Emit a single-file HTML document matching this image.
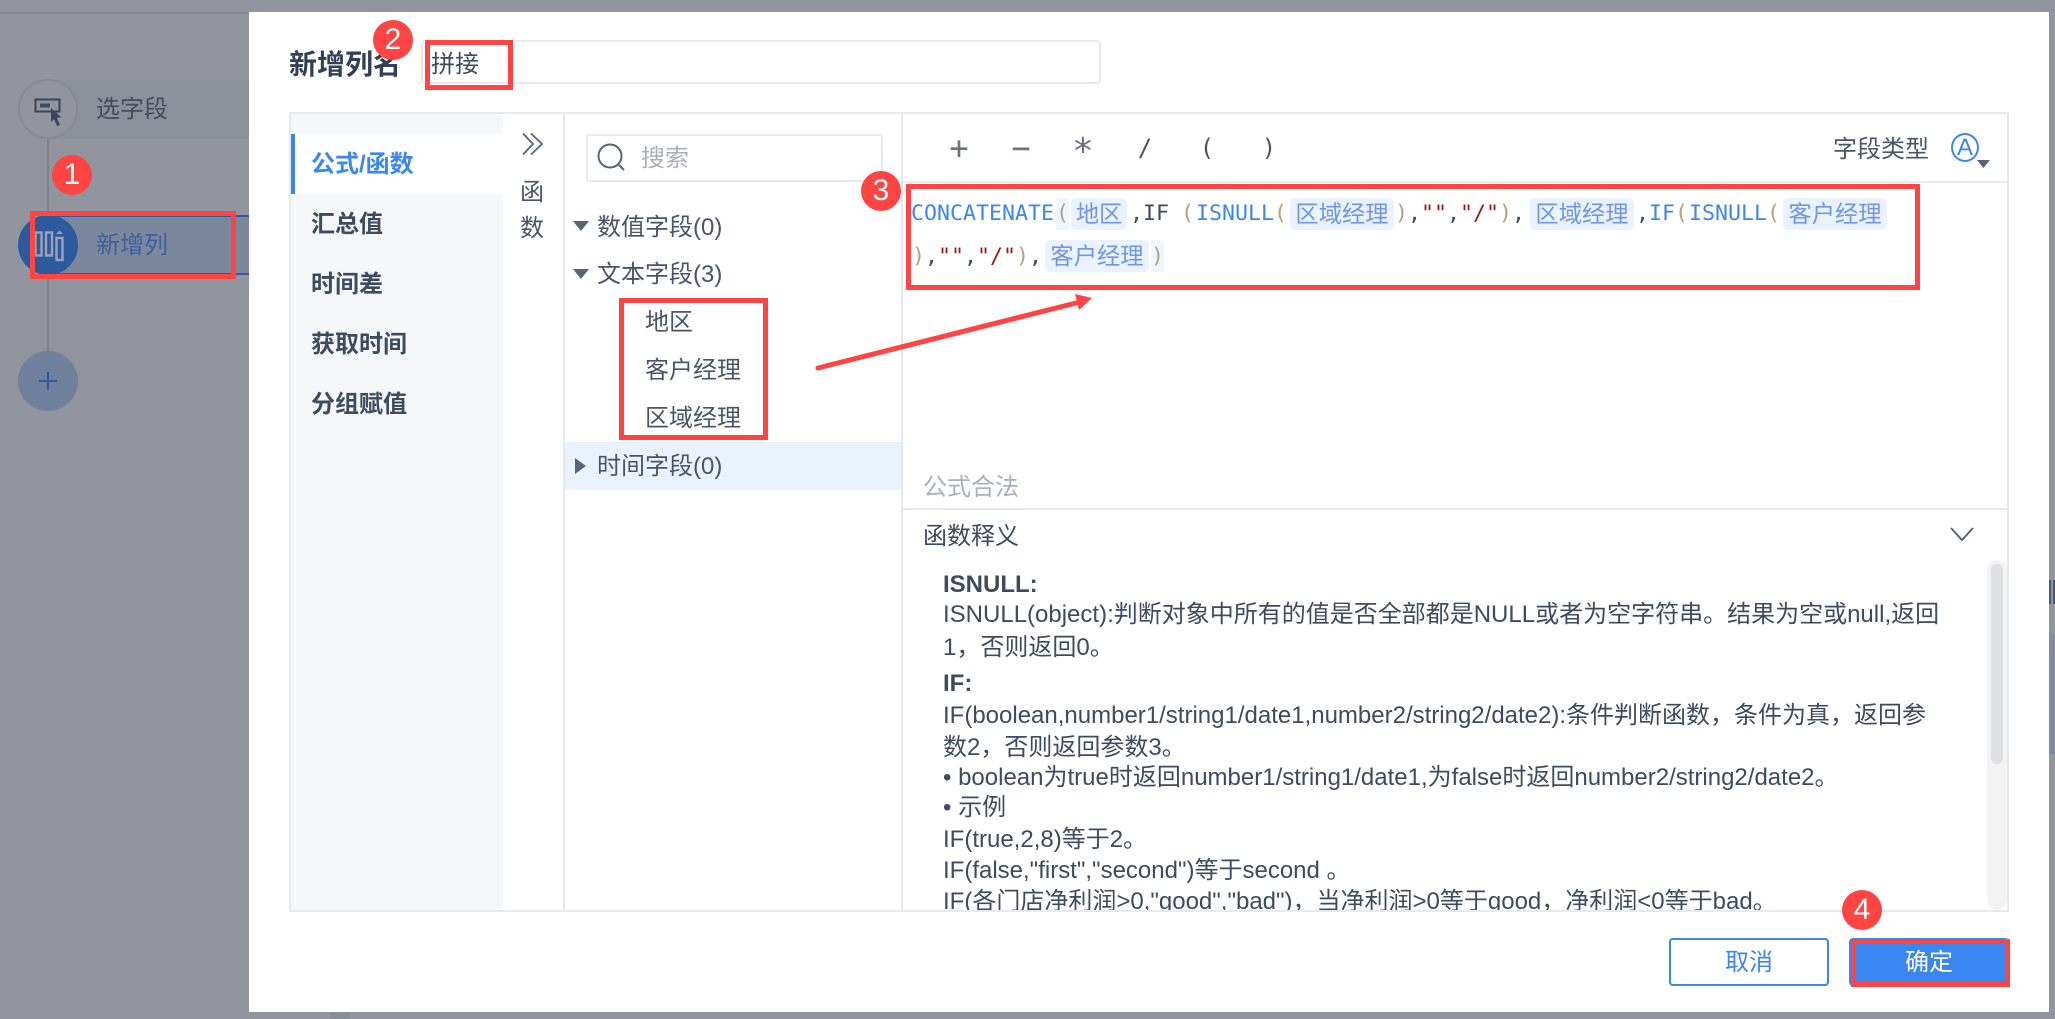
<!DOCTYPE html>
<html lang="zh">
<head>
<meta charset="utf-8">
<title>新增列名</title>
<style>
html,body{margin:0;padding:0;width:2055px;height:1019px;overflow:hidden;background:#92959d}
body{position:relative;font-family:"Liberation Sans","Noto Sans CJK SC",sans-serif;font-size:24px;color:#3d4a60}
.a{position:absolute;box-sizing:border-box}
.t{position:absolute;white-space:pre;line-height:32px;height:32px}
.b{font-weight:bold}
.m{position:absolute;white-space:pre;line-height:32px;height:32px;font-family:"DejaVu Sans Mono","Noto Sans CJK SC",monospace;font-size:21.6px;color:#3d4a60}
.fn{color:#3b86f2}.pn{color:#b3a27c}.st{color:#a31515}
.chip{position:absolute;background:#e9f2fe;border-radius:5px;height:32px;line-height:32px;color:#6f95ea;text-align:center;font-size:23.3px;white-space:pre}
.pb{position:absolute;background:#eef5fe;height:32px}
.red{position:absolute;box-sizing:border-box;border:5px solid #ff4444}
.badge{position:absolute;width:40px;height:40px;border-radius:50%;background:#ff4444;color:#fff;text-align:center;line-height:40px;font-size:30px}
.op{position:absolute;white-space:pre;line-height:32px;height:32px;width:30px;text-align:center;font-family:"DejaVu Sans Mono",monospace;font-size:24px;color:#4a5468;top:132px}
.big{font-size:32px;color:#6a7384}
</style>
</head>
<body>

<!-- background page -->
<div class="a" style="left:0;top:12px;width:249px;height:2px;background:#878a93"></div>
<div class="a" style="left:48px;top:80px;width:201px;height:59px;background:#8b9099"></div>
<div class="a" style="left:47px;top:139px;width:2px;height:213px;background:#7e838e"></div>
<div class="a" style="left:18px;top:79px;width:60px;height:60px;border-radius:50%;background:#92959d;border:2px solid #878b95"></div>
<svg class="a" style="left:34px;top:98px" width="30" height="30" viewBox="0 0 30 30">
  <rect x="1.5" y="1.5" width="24" height="12" fill="none" stroke="#3d4358" stroke-width="2"/>
  <rect x="6" y="5.5" width="10" height="4" fill="#3d4a60"/>
  <path d="M17 10 L27 19 L23 20 L26 27 L23 28 L20 21 L17 24 Z" fill="#3a4660"/>
</svg>
<div class="t" style="left:96px;top:94px;color:#454c5e">选字段</div>

<div class="a" style="left:48px;top:215px;width:201px;height:60px;background:#7a879d;border-top:2px solid #2f5a9e;border-bottom:2px solid #2f5a9e"></div>
<div class="a" style="left:18px;top:215px;width:60px;height:60px;border-radius:50%;background:#2d5a9f"></div>
<svg class="a" style="left:34px;top:228px" width="30" height="34" viewBox="0 0 30 34">
  <rect x="1.5" y="4.5" width="6" height="23" fill="none" stroke="#9aa3b4" stroke-width="2.4"/>
  <rect x="12" y="4.5" width="6" height="23" fill="none" stroke="#9aa3b4" stroke-width="2.4"/>
  <rect x="22.5" y="10" width="6" height="22" fill="none" stroke="#9aa3b4" stroke-width="2.4"/>
  <path d="M22 6 L25.5 2.5 L29 6 Z" fill="#9aa3b4"/>
</svg>
<div class="t" style="left:96px;top:230px;color:#3d609f">新增列</div>

<div class="a" style="left:18px;top:351px;width:60px;height:60px;border-radius:50%;background:#70819d"></div>
<div class="a" style="left:39px;top:380px;width:18px;height:2px;background:#2f5a9e"></div>
<div class="a" style="left:47px;top:372px;width:2px;height:18px;background:#2f5a9e"></div>

<!-- right strip -->
<div class="a" style="left:2049px;top:580px;width:6px;height:24px;background:repeating-linear-gradient(90deg,#4a5a78 0 2px,#92959d 2px 4px)"></div>
<div class="a" style="left:2049px;top:634px;width:6px;height:118px;background:#858c9c"></div>
<div class="a" style="left:2049px;top:752px;width:6px;height:2px;background:#7a88a8"></div>
<div class="a" style="left:330px;top:1012px;width:20px;height:7px;background:#8a8e97"></div>

<!-- dialog -->
<div class="a" style="left:249px;top:12px;width:1800px;height:1000px;background:#fff"></div>

<div class="t b" style="left:289px;top:49px;font-size:28px;color:#333f54">新增列名</div>
<div class="a" style="left:421px;top:40px;width:680px;height:44px;border:2px solid #e8e9ee;border-radius:4px"></div>
<div class="t" style="left:431px;top:49px;color:#3d4a60">拼接</div>

<!-- main panel -->
<div class="a" style="left:289px;top:112px;width:1720px;height:800px;border:2px solid #e8e9ee"></div>
<div class="a" style="left:291px;top:114px;width:212px;height:796px;background:#f6f7f9"></div>
<div class="a" style="left:291px;top:134px;width:212px;height:60px;background:#fff"></div>
<div class="a" style="left:291px;top:134px;width:4px;height:60px;background:#3b86f2"></div>
<div class="t b" style="left:311px;top:149px;color:#3b86f2">公式/函数</div>
<div class="t b" style="left:311px;top:209px">汇总值</div>
<div class="t b" style="left:311px;top:269px">时间差</div>
<div class="t b" style="left:311px;top:329px">获取时间</div>
<div class="t b" style="left:311px;top:389px">分组赋值</div>

<!-- collapse col -->
<svg class="a" style="left:522px;top:132px" width="22" height="24" viewBox="0 0 22 24" fill="none" stroke="#5a6478" stroke-width="1.8">
  <path d="M1 1.5 L11 12 L1 22.5"/><path d="M9 1.5 L20 12 L9 22.5"/>
</svg>
<div class="t" style="left:520px;top:177px;color:#4a5468">函</div>
<div class="t" style="left:520px;top:213px;color:#4a5468">数</div>

<div class="a" style="left:563px;top:114px;width:2px;height:796px;background:#e8e9ee"></div>
<div class="a" style="left:901px;top:114px;width:2px;height:796px;background:#e8e9ee"></div>

<!-- search -->
<div class="a" style="left:586px;top:134px;width:297px;height:48px;border:2px solid #e8e9ee;border-radius:3px"></div>
<svg class="a" style="left:596px;top:142px" width="30" height="30" viewBox="0 0 30 30" fill="none" stroke="#5a6478" stroke-width="2">
  <circle cx="14" cy="14" r="11.5"/><path d="M22.5 22.5 L28 28"/>
</svg>
<div class="t" style="left:641px;top:143px;color:#a9aeb8">搜索</div>

<!-- tree -->
<div class="a" style="left:565px;top:442px;width:336px;height:48px;background:#eaf2fd"></div>
<svg class="a" style="left:572px;top:220px" width="18" height="12"><path d="M1 1H17L9 11Z" fill="#5a6478"/></svg>
<div class="t" style="left:597px;top:212px;color:#4a5468">数值字段(0)</div>
<svg class="a" style="left:572px;top:268px" width="18" height="12"><path d="M1 1H17L9 11Z" fill="#5a6478"/></svg>
<div class="t" style="left:597px;top:259px;color:#4a5468">文本字段(3)</div>
<div class="t" style="left:645px;top:307px;color:#4a5468">地区</div>
<div class="t" style="left:645px;top:355px;color:#4a5468">客户经理</div>
<div class="t" style="left:645px;top:403px;color:#4a5468">区域经理</div>
<svg class="a" style="left:574px;top:457px" width="13" height="18"><path d="M1 1V17L12 9Z" fill="#5a6478"/></svg>
<div class="t" style="left:597px;top:451px;color:#4a5468">时间字段(0)</div>

<!-- formula toolbar -->
<div class="a" style="left:903px;top:181px;width:1104px;height:2px;background:#e8e9ee"></div>
<div class="op big" style="left:944px">+</div>
<div class="op big" style="left:1006px">−</div>
<div class="op big" style="left:1068px;top:136px;font-size:36px">*</div>
<div class="op" style="left:1130px">/</div>
<div class="op" style="left:1192px">(</div>
<div class="op" style="left:1254px">)</div>
<div class="t" style="left:1833px;top:134px;color:#4a5468">字段类型</div>
<div class="a" style="left:1951px;top:133px;width:28px;height:29px;border:2px solid #3b86f2;border-radius:50%;color:#3b86f2;font-size:24px;line-height:25px;text-align:center">A</div>
<svg class="a" style="left:1977px;top:160px" width="14" height="9"><path d="M0 0H13L6.5 8Z" fill="#5a6478"/></svg>

<!-- formula line 1 -->
<div class="m fn" style="left:911px;top:198px">CONCATENATE</div>
<div class="pb" style="left:1056px;top:198px;width:13px"></div>
<div class="m pn" style="left:1056px;top:198px">(</div>
<div class="chip" style="left:1071px;top:198px;width:56px">地区</div>
<div class="m" style="left:1130px;top:198px">,IF </div>
<div class="m pn" style="left:1181px;top:198px">(</div>
<div class="m fn" style="left:1196px;top:198px">ISNULL</div>
<div class="m pn" style="left:1274px;top:198px">(</div>
<div class="chip" style="left:1290px;top:198px;width:104px">区域经理</div>
<div class="m pn" style="left:1395px;top:198px">)</div>
<div class="m" style="left:1408px;top:198px">,</div>
<div class="m st" style="left:1421px;top:198px">""</div>
<div class="m" style="left:1447px;top:198px">,</div>
<div class="m st" style="left:1460px;top:198px">"/"</div>
<div class="m pn" style="left:1499px;top:198px">)</div>
<div class="m" style="left:1512px;top:198px">,</div>
<div class="chip" style="left:1530px;top:198px;width:104px">区域经理</div>
<div class="m" style="left:1636px;top:198px">,</div>
<div class="m fn" style="left:1649px;top:198px">IF</div>
<div class="m pn" style="left:1675px;top:198px">(</div>
<div class="m fn" style="left:1689px;top:198px">ISNULL</div>
<div class="m pn" style="left:1767px;top:198px">(</div>
<div class="chip" style="left:1783px;top:198px;width:104px">客户经理</div>

<!-- formula line 2 -->
<div class="m pn" style="left:912px;top:241px">)</div>
<div class="m" style="left:925px;top:241px">,</div>
<div class="m st" style="left:938px;top:241px">""</div>
<div class="m" style="left:964px;top:241px">,</div>
<div class="m st" style="left:977px;top:241px">"/"</div>
<div class="m pn" style="left:1016px;top:241px">)</div>
<div class="m" style="left:1029px;top:241px">,</div>
<div class="chip" style="left:1045px;top:240px;width:104px">客户经理</div>
<div class="pb" style="left:1151px;top:241px;width:13px;height:31px"></div>
<div class="m pn" style="left:1151px;top:241px">)</div>

<!-- status + definition -->
<div class="t" style="left:923px;top:472px;color:#a9aeb8">公式合法</div>
<div class="a" style="left:903px;top:508px;width:1104px;height:2px;background:#e8e9ee"></div>
<div class="t" style="left:923px;top:521px">函数释义</div>
<svg class="a" style="left:1950px;top:526px" width="24" height="17" viewBox="0 0 24 17" fill="none" stroke="#5a6478" stroke-width="2"><path d="M1 2 L12 14 L23 2"/></svg>

<div class="a" style="left:903px;top:510px;width:1084px;height:400px;overflow:hidden">
  <div class="t b" style="left:40px;top:59px">ISNULL:</div>
  <div class="t" style="left:40px;top:89px">ISNULL(object):判断对象中所有的值是否全部都是NULL或者为空字符串。结果为空或null,返回</div>
  <div class="t" style="left:40px;top:122px">1，否则返回0。</div>
  <div class="t b" style="left:40px;top:158px">IF:</div>
  <div class="t" style="left:40px;top:190px">IF(boolean,number1/string1/date1,number2/string2/date2):条件判断函数，条件为真，返回参</div>
  <div class="t" style="left:40px;top:222px">数2，否则返回参数3。</div>
  <div class="t" style="left:40px;top:252px">• boolean为true时返回number1/string1/date1,为false时返回number2/string2/date2。</div>
  <div class="t" style="left:40px;top:282px">• 示例</div>
  <div class="t" style="left:40px;top:314px">IF(true,2,8)等于2。</div>
  <div class="t" style="left:40px;top:345px">IF(false,"first","second")等于second 。</div>
  <div class="t" style="left:40px;top:376px">IF(各门店净利润&gt;0,"good","bad")，当净利润&gt;0等于good，净利润&lt;0等于bad。</div>
</div>

<!-- scrollbar -->
<div class="a" style="left:1987px;top:560px;width:20px;height:350px;background:#f3f3f4;border-radius:10px 10px 10px 10px"></div>
<div class="a" style="left:1991px;top:564px;width:12px;height:200px;background:#dfe0e4;border-radius:6px"></div>

<!-- buttons -->
<div class="a" style="left:1669px;top:938px;width:160px;height:48px;border:2px solid #3b86f2;border-radius:4px;color:#3b86f2;text-align:center;line-height:46px">取消</div>
<div class="a" style="left:1849px;top:938px;width:160px;height:48px;background:#3a86f1;border-radius:4px;color:#fff;text-align:center;line-height:50px">确定</div>

<!-- annotations -->
<div class="red" style="left:30px;top:211px;width:206px;height:68px"></div>
<div class="red" style="left:425px;top:40px;width:88px;height:50px"></div>
<div class="red" style="left:906px;top:184px;width:1014px;height:106px"></div>
<div class="red" style="left:619px;top:298px;width:149px;height:142px"></div>
<div class="red" style="left:1851px;top:939px;width:159px;height:48px"></div>

<svg class="a" style="left:0;top:0" width="2055" height="1019">
  <path d="M818 368 L1080 302" stroke="#ff4444" stroke-width="5" stroke-linecap="round" fill="none"/>
  <path d="M1092 298 L1075 294 L1079 310 Z" fill="#ff4444"/>
</svg>

<div class="badge" style="left:52px;top:155px">1</div>
<div class="badge" style="left:373px;top:20px">2</div>
<div class="badge" style="left:861px;top:171px">3</div>
<div class="badge" style="left:1842px;top:890px">4</div>

</body>
</html>
